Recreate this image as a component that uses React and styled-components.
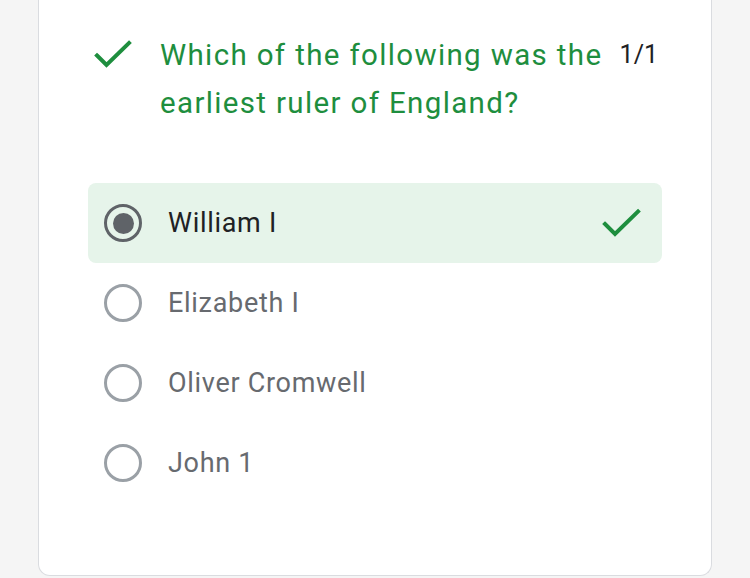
import React from 'react'
import styled, { createGlobalStyle } from 'styled-components'

const GlobalStyle = createGlobalStyle`
  html, body {
    margin: 0;
    padding: 0;
    background: #f5f5f5;
    font-family: Roboto, "Liberation Sans", Arial, sans-serif;
    overflow: hidden;
  }
`

const Page = styled.div`
  width: 750px;
  height: 578px;
  padding-left: 38px;
  box-sizing: border-box;
`

const Card = styled.div`
  width: 674px;
  height: 576px;
  box-sizing: border-box;
  background: #fff;
  border: 1px solid #dadce0;
  border-top: none;
  border-radius: 0 0 12px 12px;
  padding: 31px 49px 0 49px;
`

const Header = styled.div`
  display: flex;
  align-items: flex-start;
  padding: 0 4px 0 6px;
`

const HeaderIcon = styled.div`
  width: 66px;
  height: 48px;
  display: flex;
  align-items: center;
  flex-shrink: 0;
`

const Question = styled.div`
  flex: 1;
  font-size: 29.5px;
  line-height: 48px;
  color: #1e8e3e;
  letter-spacing: 1.35px;
`

const Score = styled.div`
  font-size: 25px;
  line-height: 48px;
  color: #202124;
  margin-left: 10px;
`

const Options = styled.div`
  margin-top: 56px;
  display: flex;
  flex-direction: column;
`

const Option = styled.div`
  height: 80px;
  display: flex;
  align-items: center;
  padding: 0 21px 0 16px;
  border-radius: 8px;
  background: ${p => (p.$correct ? '#e6f4ea' : 'transparent')};
`

const Radio = styled.div`
  width: 38px;
  height: 38px;
  box-sizing: border-box;
  border-radius: 50%;
  border: 3.5px solid ${p => (p.$checked ? '#5f6368' : '#9aa0a6')};
  display: flex;
  align-items: center;
  justify-content: center;
  flex-shrink: 0;

  &::after {
    content: '';
    display: ${p => (p.$checked ? 'block' : 'none')};
    width: 21px;
    height: 21px;
    border-radius: 50%;
    background: #5f6368;
  }
`

const Label = styled.div`
  flex: 1;
  margin-left: 26px;
  font-size: 27px;
  letter-spacing: 0.7px;
  color: ${p => (p.$checked ? '#202124' : '#676a6f')};
`

const Check = ({ w, h, d }) => (
  <svg width={w} height={h} viewBox={`0 0 ${w} ${h}`}>
    <path d={d} fill="none" stroke="#1e8e3e" strokeWidth="4" strokeLinecap="square" />
  </svg>
)

const options = [
  { label: 'William I', checked: true, correct: true },
  { label: 'Elizabeth I' },
  { label: 'Oliver Cromwell' },
  { label: 'John 1' },
]

const App = () => {
  return (
    <>
      <GlobalStyle />
      <Page>
        <Card>
          <Header>
            <HeaderIcon>
              <Check w={38} h={30} d="M3 15.5 L12.5 25 L35 3" />
            </HeaderIcon>
            <Question>
              Which of the following was the earliest ruler of England?
            </Question>
            <Score>1/1</Score>
          </Header>
          <Options>
            {options.map(o => (
              <Option key={o.label} $correct={o.correct}>
                <Radio $checked={o.checked} />
                <Label $checked={o.checked}>{o.label}</Label>
                {o.correct && <Check w={40} h={30} d="M4 16 L14 26 L37 3.5" />}
              </Option>
            ))}
          </Options>
        </Card>
      </Page>
    </>
  )
}

export default App
